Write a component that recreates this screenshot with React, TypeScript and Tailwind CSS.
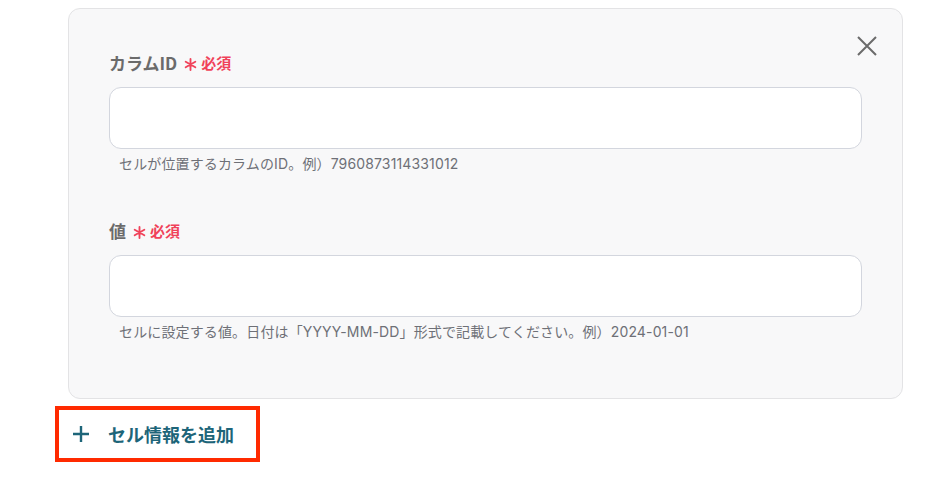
import React from 'react';

const font = { fontFamily: '"Noto Sans CJK JP", "Noto Sans", sans-serif' };
const helpFont = { fontFamily: 'Inter, "Noto Sans CJK JP", sans-serif' };

function Field({ label, help }: { label: string; help: string }) {
  return (
    <div>
      <div className="flex items-center h-6">
        <span className="text-[17px] font-bold text-[#6b6b6b]">{label}</span>
        <svg className="ml-[7px] mr-[4px] mt-[3px]" width="13" height="13" viewBox="0 0 14 14" stroke="#f0425a" strokeWidth="2" strokeLinecap="round">
          <path d="M7 1 V13 M1.8 4 L12.2 10 M12.2 4 L1.8 10" />
        </svg>
        <span className="text-[15px] font-bold text-[#f0425a]">必須</span>
      </div>
      <div className="mt-3 h-[62px] rounded-xl border border-[#d3d6de] bg-white" />
      <p className="mt-[5px] pl-[10px] text-[14px] leading-5 tracking-[0.01em] text-[#6e7077]" style={helpFont}>{help}</p>
    </div>
  );
}

export default function App() {
  return (
    <div className="w-[934px] h-[494px] bg-white pt-2 pl-[68px]" style={font}>
      <div className="relative w-[835px] h-[391px] rounded-xl border border-[#e3e3e5] bg-[#f8f8f9] pt-[42px] pl-10 pr-10">
        <button className="absolute right-[24px] top-[26px] text-[#6b6b6b]">
          <svg width="22" height="22" viewBox="0 0 22 22" fill="none" stroke="currentColor" strokeWidth="2">
            <path d="M2 2 L20 20 M20 2 L2 20" />
          </svg>
        </button>
        <Field label="カラムID" help="セルが位置するカラムのID。例）7960873114331012" />
        <div className="h-[45px]" />
        <Field label="値" help="セルに設定する値。日付は「YYYY-MM-DD」形式で記載してください。例）2024-01-01" />
      </div>
      <div className="mt-[7px] -ml-[13px] w-[205px] h-[56px] border-4 border-[#ff2a00] flex items-center pl-[13px] gap-[18px] text-[#1d6579]">
        <svg width="18" height="18" viewBox="0 0 18 18" stroke="currentColor" strokeWidth="2.4">
          <path d="M9 1 V17 M1 9 H17" />
        </svg>
        <span className="text-[18px] font-bold">セル情報を追加</span>
      </div>
    </div>
  );
}
